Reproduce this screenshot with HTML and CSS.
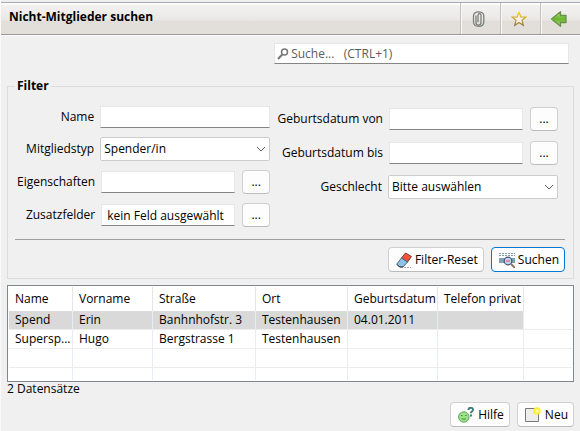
FILE: index.html
```html
<!DOCTYPE html>
<html lang="de">
<head>
<meta charset="utf-8">
<title>Nicht-Mitglieder suchen</title>
<link rel="stylesheet" href="styles.css">
</head>
<body>
<header class="titlebar">
  <h1 class="title">Nicht-Mitglieder suchen</h1>
  <button class="tool" type="button" aria-label="Anhang">
    <svg width="16" height="18" viewBox="0 0 16 18" fill="none" stroke="#7d807c" stroke-width="1.300" stroke-linecap="round"><path d="M5 6v6.500c0 3.500 5 3.500 5 0V5c0-2-3-2-3 0v6.500"/><path d="M7.500 16.300C4 16.300 2.500 14.500 2.500 12V6C2.500 .5 12.800 .5 12.800 5.500V12c0 2.800-2 4.300-5.300 4.300"/></svg>
  </button>
  <button class="tool" type="button" aria-label="Favorit">
    <svg width="16" height="16" viewBox="0 0 16 16"><defs><linearGradient id="gold" x1="0" y1="0" x2="0" y2="1"><stop offset="0" stop-color="#ffd21f"/><stop offset="1" stop-color="#94783a"/></linearGradient></defs><path d="M8 1.200l1.900 4.600 5 .3-3.900 3.200 1.300 5L8 11.500l-4.300 2.800 1.300-5L1.100 6.100l5-.3z" fill="#f6f1e2" stroke="url(#gold)" stroke-width="1.200"/></svg>
  </button>
  <button class="tool" type="button" aria-label="Zurück">
    <svg width="18" height="18" viewBox="0 0 18 18"><defs><linearGradient id="green" x1="0" y1="0" x2="0" y2="1"><stop offset="0" stop-color="#b5e08c"/><stop offset=".5" stop-color="#69b52c"/><stop offset="1" stop-color="#a5d876"/></linearGradient></defs><path d="M1.500 9L10.500 1.700v3.800h5.500v7h-5.500v3.800z" fill="url(#green)" stroke="#659247" stroke-width="1.300" stroke-linejoin="round"/></svg>
  </button>
</header>
<main class="content">
  <label class="search">
    <svg width="12" height="12" viewBox="0 0 12 12" fill="none" stroke="#777" stroke-width="1.500"><circle cx="7.500" cy="4" r="3"/><path d="M5.500 6.200L1 11" stroke-width="2"/></svg>
    <input class="search-input" type="search" aria-label="Suche" placeholder="Suche...   (CTRL+1)">
  </label>
  <fieldset class="filter">
    <legend class="legend">Filter</legend>
    <div class="columns">
      <div class="column left">
        <div class="row short"><label for="name">Name</label><input class="text" id="name" type="text"></div>
        <div class="row"><label for="typ">Mitgliedstyp</label><span class="drop"><select id="typ"><option>Spender/in</option></select><svg class="chevron" width="10" height="6" viewBox="0 0 10 6"><path d="M1 1l4 4 4-4"/></svg></span></div>
        <div class="row"><label for="eig">Eigenschaften</label><input class="text" id="eig" type="text"><button class="more" type="button" aria-label="Eigenschaften wählen">...</button></div>
        <div class="row"><label for="zus">Zusatzfelder</label><input class="text" id="zus" type="text" value="kein Feld ausgewählt"><button class="more" type="button" aria-label="Zusatzfelder wählen">...</button></div>
      </div>
      <div class="column right">
        <div class="row"><label for="von">Geburtsdatum von</label><input class="text" id="von" type="text"><button class="more" type="button" aria-label="Datum von wählen">...</button></div>
        <div class="row"><label for="bis">Geburtsdatum bis</label><input class="text" id="bis" type="text"><button class="more" type="button" aria-label="Datum bis wählen">...</button></div>
        <div class="row"><label for="geschlecht">Geschlecht</label><span class="drop"><select id="geschlecht"><option>Bitte auswählen</option></select><svg class="chevron" width="10" height="6" viewBox="0 0 10 6"><path d="M1 1l4 4 4-4"/></svg></span></div>
      </div>
    </div>
    <div class="actions">
      <button class="button" type="button">
        <svg width="16" height="16" viewBox="0 0 16 16"><path d="M8 15.500h7" stroke="#aaa" stroke-dasharray="2 1"/><path d="M9.500 1L15.500 4.500 11.500 10 5.500 6z" fill="#f4533b" stroke="#7c3a33"/><path d="M5.500 6l6 4-4.500 5H3.500L.7 12.200z" fill="#8cc5ea" stroke="#52616c"/><path d="M1 12.500l3 2.500h3" fill="none" stroke="#444"/></svg>
        Filter-Reset
      </button>
      <button class="button primary" type="button">
        <svg width="16" height="16" viewBox="0 0 16 16"><path d="M0 1.500h16M0 3.500h16" stroke="#829fa9" stroke-dasharray="2 1"/><path d="M0 6h16v5H0z" fill="#7fa3b0"/><path d="M12 12l4 4" stroke="#8e765f" stroke-width="2"/><circle cx="9" cy="9" r="3.800" fill="#bfd5f3" stroke="#3e5378" stroke-width="1.200"/><path d="M7 9h4" stroke="#e08a98" stroke-width="2"/></svg>
        Suchen
      </button>
    </div>
  </fieldset>
  <div class="grid">
    <table>
      <colgroup><col class="c-name"><col class="c-vor"><col class="c-str"><col class="c-ort"><col class="c-geb"><col class="c-tel"><col></colgroup>
      <thead><tr><th>Name</th><th>Vorname</th><th>Straße</th><th>Ort</th><th>Geburtsdatum</th><th>Telefon privat</th><th></th></tr></thead>
      <tbody>
        <tr class="selected"><td>Spend</td><td>Erin</td><td>Banhnhofstr. 3</td><td>Testenhausen</td><td>04.01.2011</td><td></td><td></td></tr>
        <tr><td>Supersp...</td><td>Hugo</td><td>Bergstrasse 1</td><td>Testenhausen</td><td></td><td></td><td></td></tr>
        <tr><td></td><td></td><td></td><td></td><td></td><td></td><td></td></tr>
        <tr class="cut"><td></td><td></td><td></td><td></td><td></td><td></td><td></td></tr>
      </tbody>
    </table>
  </div>
  <p class="count">2 Datensätze</p>
  <footer class="footer">
    <button class="button" type="button">
      <svg width="16" height="16" viewBox="0 0 16 16"><circle cx="5.800" cy="10" r="5.200" fill="#9be283" stroke="#60a866"/><path d="M3 8.500h1.500M7 8.500h1.500M3.500 12h4.500" stroke="#4f8757" fill="none"/><path d="M10.500 3c0-3 4.500-3 4.500-.3 0 1.800-2.200 1.700-2.200 3.500" fill="none" stroke="#3b7f80" stroke-width="2"/><path d="M12 7.500h2v2h-2z" fill="#3b7f80"/></svg>
      Hilfe
    </button>
    <button class="button" type="button">
      <svg width="16" height="16" viewBox="0 0 16 16"><path d="M.5 1.500h13v13H.5z" fill="#ededed" stroke="#777"/><circle cx="12" cy="4" r="2.800" fill="#fff9b8" stroke="#ffed35" stroke-width="2"/></svg>
      Neu
    </button>
  </footer>
</main>
</body>
</html>
```

FILE: styles.css
```css
* {
  box-sizing: border-box;
}

body {
  margin: 0;
  padding-top: 2px;
  min-height: 100vh;
  background: #f0f0f0;
  border-left: 1px solid #fafafa;
  color: #000;
  font: 12px/16px "Open Sans", "Noto Sans", sans-serif;
}

button,
input,
select {
  font: inherit;
  color: inherit;
  margin: 0;
}

svg {
  display: block;
  flex: none;
}

.titlebar {
  display: flex;
  height: 33px;
  border-top: 1px solid #a6a9b2;
  border-bottom: 1px solid #999;
  background: linear-gradient(#fff 1px, #f3f2f0 2px, #eae8e5 17px, #e2dfda 18px, #e2dfda);
  box-shadow: 0 1px #fff;
}

.title {
  flex: 1;
  margin: 0;
  padding: 6px 8px;
  font-size: 12px;
  line-height: 16px;
  font-weight: 700;
}

.tool {
  display: grid;
  place-items: center;
  width: 40px;
  padding: 0 4px 0 0;
  border: 0;
  border-left: 1px solid #c5c3c0;
  background: none;
  box-shadow: inset 1px 0 #f8f7f5;
}

.content {
  padding: 8px 6px 4px;
}

.search {
  display: flex;
  align-items: center;
  gap: 2px;
  width: 52%;
  height: 21px;
  margin: 0 5px 14px auto;
  padding-left: 2px;
  background: #fff;
  border: 1px solid #e6e6e6;
  border-bottom-color: #858585;
}

.search-input {
  flex: 1;
  min-width: 0;
  padding: 0;
  border: 0;
  outline: 0;
  background: none;
  white-space: pre;
}

.search-input::placeholder {
  color: #5c5c5c;
  opacity: 1;
}

.filter {
  min-width: 0;
  margin: 0;
  padding: 12px 8px 6px 7px;
  border: 1px solid #dcdcdc;
}

.legend {
  padding: 0 2px;
  font-size: 12px;
  line-height: 16px;
  font-weight: 700;
}

.columns {
  display: flex;
  padding-right: 7px;
}

.column {
  display: flex;
  flex-direction: column;
}

.left {
  gap: 9px;
  width: 47%;
}

.right {
  gap: 10px;
  width: 53%;
  padding-top: 1px;
}

.row {
  display: flex;
  align-items: center;
  height: 24px;
}

.short {
  height: 22px;
}

.row label {
  flex: 1;
  padding-right: 6px;
  text-align: right;
  white-space: nowrap;
}

.text {
  width: 134px;
  height: 22px;
  padding: 0 5px;
  background: #fff;
  border: 1px solid #e6e6e6;
  border-bottom-color: #858585;
  outline: 0;
}

.short .text,
.drop {
  width: 170px;
}

.drop {
  display: grid;
  align-items: center;
}

.drop > * {
  grid-area: 1 / 1;
}

.drop select {
  height: 24px;
  padding: 0 3px;
  border: 1px solid #ccc;
  border-radius: 2px;
  background: #fff;
  appearance: none;
}

.chevron {
  justify-self: end;
  margin-right: 4px;
  fill: none;
  stroke: #606060;
  pointer-events: none;
}

.more,
.button {
  border: 1px solid #d0d0d0;
  border-bottom-color: #bbb;
  border-radius: 4px;
  background: #fdfdfd;
}

.more {
  width: 28px;
  height: 24px;
  margin-left: 7px;
  padding: 0;
}

.actions {
  display: flex;
  justify-content: flex-end;
  gap: 7px;
  margin-top: 12px;
  padding-top: 7px;
  border-top: 1px solid #a0a0a0;
}

.button {
  display: flex;
  align-items: center;
  gap: 4px;
  height: 25px;
  padding: 0 5px 0 7px;
}

.actions .button {
  gap: 3px;
}

.primary {
  border-color: #0078d4;
}

.grid {
  margin-top: 6px;
  padding: 1px;
  background: #fff;
  border: 1px solid #828790;
}

table {
  width: 100%;
  table-layout: fixed;
  border-collapse: separate;
  border-spacing: 0;
}

.c-name { width: 64px; }
.c-vor { width: 80px; }
.c-str { width: 103px; }
.c-ort { width: 92px; }
.c-geb { width: 90px; }
.c-tel { width: 86px; }

th,
td {
  padding: 0 0 0 6px;
  border-right: 1px solid #e5e5e5;
  text-align: left;
  font-weight: 400;
  white-space: nowrap;
}

th {
  height: 24px;
}

td {
  height: 19px;
  line-height: 18px;
  border-right-color: #e8edf5;
  border-bottom: 1px solid #ececec;
}

th:last-child,
td:last-child {
  border-right: 0;
}

.selected td:not(:last-child) {
  background: #d9d9d9;
}

.cut td {
  height: 12px;
  border-bottom: 0;
}

.count {
  margin: 0;
  line-height: 14px;
}

.footer {
  display: flex;
  justify-content: flex-end;
  gap: 7px;
  margin-top: 6px;
}
```
